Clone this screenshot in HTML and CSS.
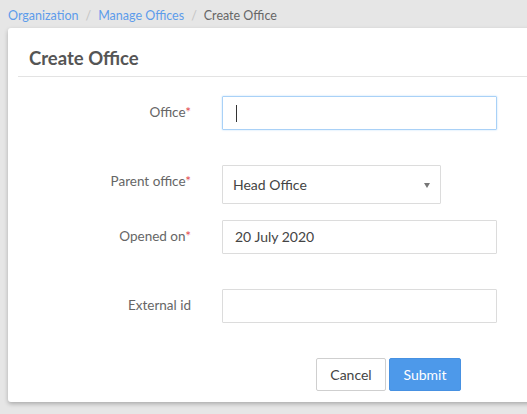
FILE: index.html
```html
<!DOCTYPE html>
<html>
<head>
<meta charset="utf-8">
<link rel="stylesheet" href="styles.css">
</head>
<body>
<nav class="crumbs">
  <a class="crumb-link">Organization</a><span class="sep">/</span><a class="crumb-link">Manage Offices</a><span class="sep">/</span><span class="crumb-current">Create Office</span>
</nav>
<section class="card">
  <h1 class="card-title">Create Office</h1>
  <form class="form">
    <div class="row row-office">
      <label class="lbl">Office<span class="req">*</span></label>
      <div class="input input-focus"><span class="caret"></span></div>
    </div>
    <div class="row row-parent">
      <label class="lbl">Parent office<span class="req">*</span></label>
      <div class="input select">Head Office<span class="arrow"></span></div>
    </div>
    <div class="row row-opened">
      <label class="lbl">Opened on<span class="req">*</span></label>
      <div class="input">20 July 2020</div>
    </div>
    <div class="row row-ext">
      <label class="lbl">External id</label>
      <div class="input"></div>
    </div>
    <div class="actions">
      <button type="button" class="btn btn-cancel">Cancel</button>
      <button type="button" class="btn btn-submit">Submit</button>
    </div>
  </form>
</section>
</body>
</html>
```
FILE: styles.css
```css
html, body {
  margin: 0;
  padding: 0;
  background: #e6e6e6;
  overflow: hidden;
  width: 527px;
  height: 414px;
  font-family: "Lato", "Open Sans", sans-serif;
}
.crumbs {
  padding: 8px 8px 0 8px;
  height: 20px;
  font-size: 12.5px;
  line-height: 16px;
  color: #666;
}
.crumb-link { color: #5d9ceb; }
.sep { color: #c4c4c4; margin: 0 7px; }
.crumb-current { color: #666; }
.card {
  margin-left: 8px;
  width: 560px;
  height: 374px;
  background: #fff;
  border-radius: 3px 0 0 3px;
  box-shadow: 0 2px 4px rgba(0,0,0,0.25);
  box-sizing: border-box;
}
.card-title {
  margin: 0 10px;
  padding: 18px 0 0 11px;
  height: 30px;
  border-bottom: 1px solid #e3e3e3;
  font-size: 18.5px;
  font-weight: 700;
  color: #555;
  line-height: 24px;
}
.form { display: flex; flex-direction: column; }
.row {
  display: grid;
  grid-template-columns: 183px 275px;
  column-gap: 31px;
  align-items: start;
}
.row-office { margin-top: 19px; }
.row-parent { margin-top: 35px; }
.row-opened { margin-top: 16px; }
.row-ext { margin-top: 35px; }
.lbl {
  text-align: right;
  font-size: 13.5px;
  line-height: 33px;
  color: #666;
}
.req { color: #e2474b; }
.input {
  height: 34px;
  box-sizing: border-box;
  border: 1px solid #dcdcdc;
  border-radius: 1px;
  padding: 0 12px;
  font-size: 14px;
  line-height: 32px;
  color: #444;
  position: relative;
}
.input-focus {
  border-color: #a9d1f7;
  box-shadow: 0 0 2px #b8dbfb;
}
.caret {
  position: absolute;
  left: 13px;
  top: 8px;
  width: 1px;
  height: 17px;
  background: #333;
}
.select {
  width: 219px;
  height: 39px;
  line-height: 37px;
  padding: 0 10px;
}
.arrow {
  position: absolute;
  right: 10px;
  top: 17px;
  width: 0;
  height: 0;
  border-left: 3.5px solid transparent;
  border-right: 3.5px solid transparent;
  border-top: 5px solid #777;
}
.actions {
  display: flex;
  margin-top: 35px;
  margin-left: 308px;
  gap: 3px;
}
.btn {
  height: 33px;
  font-family: inherit;
  font-size: 14px;
  border-radius: 2px;
  padding: 0;
  cursor: pointer;
}
.btn-cancel {
  width: 70px;
  background: #fff;
  border: 1px solid #cfcfcf;
  color: #444;
}
.btn-submit {
  width: 72px;
  background: #4d99ea;
  border: 1px solid #4791e2;
  color: #fff;
}
```
